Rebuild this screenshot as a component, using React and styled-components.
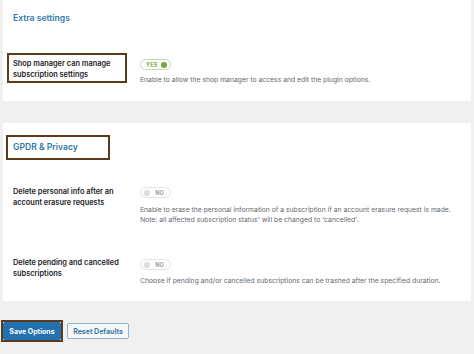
import React from "react";
import styled, { createGlobalStyle } from "styled-components";

const GlobalStyle = createGlobalStyle`
  html, body {
    margin: 0;
    padding: 0;
    background: #f0f0f1;
    font-family: Inter, "Liberation Sans", Arial, sans-serif;
    color: #1d2327;
  }
`;

const Page = styled.div`
  width: 474px;
  height: 354px;
  overflow: hidden;
  padding: 0 3px;
  box-sizing: border-box;
`;

const Panel = styled.div`
  background: #fff;
  padding: ${(p) => p.$pad};
  margin-top: ${(p) => p.$top || 0}px;
`;

const Title = styled.h2`
  margin: 0;
  font-size: 8.6px;
  font-weight: 600;
  line-height: 16px;
  color: #2f7aa8;
  display: block;
  width: fit-content;
  box-sizing: border-box;
  ${(p) =>
    p.$marked
      ? `
    border: 2px solid #5b3b1c;
    width: 104px;
    height: 25px;
    padding: 2px 0 0 5px;
    margin-left: 3px;
    line-height: 17px;
  `
      : `
    padding-left: 10px;
  `}
`;

const Row = styled.div`
  display: grid;
  grid-template-columns: 137px 1fr;
  margin-top: ${(p) => p.$top}px;
`;

const Label = styled.div`
  font-size: 7.4px;
  font-weight: 600;
  line-height: 11px;
  box-sizing: border-box;
  ${(p) =>
    p.$marked
      ? `
    border: 2px solid #5b3b1c;
    width: 120px;
    height: 30px;
    margin-left: 4px;
    padding: 3px 0 0 4px;
  `
      : `
    padding: ${p.$pt || 0}px 0 0 10px;
    width: 125px;
  `}
`;

const Control = styled.div`
  display: flex;
  flex-direction: column;
  align-items: flex-start;
  padding-top: ${(p) => p.$pt || 0}px;
`;

const Toggle = styled.div`
  width: 31px;
  height: 11px;
  border-radius: 7px;
  border: 1px solid ${(p) => (p.$on ? "#c9d8b0" : "#e2e2e2")};
  background: #fff;
  display: flex;
  align-items: center;
  flex-direction: ${(p) => (p.$on ? "row" : "row-reverse")};
  justify-content: space-between;
  padding: ${(p) => (p.$on ? "0 3px 0 5px" : "0 6px 0 3px")};
  box-sizing: border-box;
  font-size: 5.5px;
  font-weight: 700;
  letter-spacing: 0.2px;
  color: ${(p) => (p.$on ? "#8aab4e" : "#9a9ea3")};
`;

const Dot = styled.span`
  width: 6px;
  height: 6px;
  border-radius: 50%;
  background: ${(p) => (p.$on ? "#7da23a" : "#dcdcde")};
`;

const Desc = styled.p`
  margin: ${(p) => p.$top}px 0 0;
  font-size: 6.8px;
  line-height: 10px;
  color: #646970;
`;

const Actions = styled.div`
  display: flex;
  align-items: center;
  gap: 4px;
  margin: 19px 0 0 -2px;
`;

const SaveWrap = styled.div`
  border: 2px solid #5b3b1c;
  height: 22px;
  box-sizing: border-box;
  display: flex;
`;

const Button = styled.button`
  font-family: inherit;
  font-size: 7px;
  font-weight: 700;
  border-radius: 2px;
  cursor: pointer;
  padding: 0;
  box-sizing: border-box;
  height: ${(p) => (p.$primary ? "18px" : "16px")};
  width: ${(p) => (p.$primary ? "58px" : "62px")};
  background: ${(p) => (p.$primary ? "#2271b1" : "#f6f7f7")};
  color: ${(p) => (p.$primary ? "#fff" : "#3b7aa8")};
  border: 1px solid ${(p) => (p.$primary ? "#2271b1" : "#8fb4d2")};
`;

export default function App() {
  return (
    <>
      <GlobalStyle />
      <Page>
        <Panel $pad="10px 0 16px">
          <Title>Extra settings</Title>
          <Row $top={27}>
            <Label $marked>
              Shop manager can manage
              <br />
              subscription settings
            </Label>
            <Control $pt={6}>
              <Toggle $on>
                <span>YES</span>
                <Dot $on />
              </Toggle>
              <Desc $top={5}>
                Enable to allow the shop manager to access and edit the plugin options.
              </Desc>
            </Control>
          </Row>
        </Panel>

        <Panel $top={22} $pad="12px 0 15px">
          <Title $marked>GPDR &amp; Privacy</Title>
          <Row $top={26}>
            <Label>Delete personal info after an account erasure requests</Label>
            <Control $pt={1}>
              <Toggle>
                <span>NO</span>
                <Dot />
              </Toggle>
              <Desc $top={7}>
                Enable to erase the personal information of a subscription if an account erasure request is made.
                <br />
                Note: all affected subscription status' will be changed to 'cancelled'.
              </Desc>
            </Control>
          </Row>
          <Row $top={32}>
            <Label>Delete pending and cancelled subscriptions</Label>
            <Control $pt={2}>
              <Toggle>
                <span>NO</span>
                <Dot />
              </Toggle>
              <Desc $top={6}>
                Choose if pending and/or cancelled subscriptions can be trashed after the specified duration.
              </Desc>
            </Control>
          </Row>
        </Panel>

        <Actions>
          <SaveWrap>
            <Button $primary>Save Options</Button>
          </SaveWrap>
          <Button>Reset Defaults</Button>
        </Actions>
      </Page>
    </>
  );
}
